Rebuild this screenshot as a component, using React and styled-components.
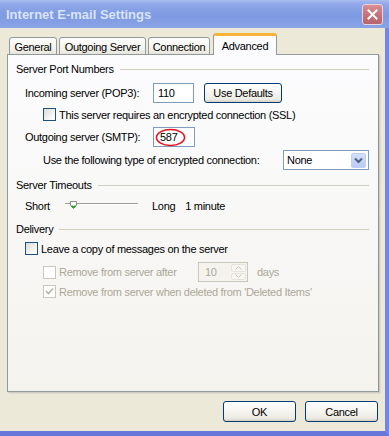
import React from 'react';
import styled, { createGlobalStyle } from 'styled-components';

const Global = createGlobalStyle`
  body { margin: 0; background: #fff; }
  * { box-sizing: border-box; }
`;

function App() {
  return (
    <>
      <Global />
      <Window>
        <TitleBar>
          <Title>Internet E-mail Settings</Title>
          <CloseButton>
            <svg width="11" height="11" viewBox="0 0 11 11">
              <path d="M1.5 1.5 L9.5 9.5 M9.5 1.5 L1.5 9.5" stroke="#fff" strokeWidth="2" strokeLinecap="square" />
            </svg>
          </CloseButton>
        </TitleBar>
        <Body>
          <TabRow>
            <Tab w={48}>General</Tab>
            <Tab w={87}>Outgoing Server</Tab>
            <Tab w={62}>Connection</Tab>
            <Tab w={64} active>Advanced</Tab>
          </TabRow>
          <Panel>
            <GroupHead>Server Port Numbers<Rule /></GroupHead>

            <Row mt={7} h={20}>
              <Label>Incoming server (POP3):</Label>
              <TextBox w={41}>110</TextBox>
              <Button w={78} ml={10}>Use Defaults</Button>
            </Row>

            <Row mt={5} h={13} indent={18}>
              <Check />
              <CheckText>This server requires an encrypted connection (SSL)</CheckText>
            </Row>

            <Row mt={6} h={20}>
              <Label>Outgoing server (SMTP):</Label>
              <TextBox w={42} pl={6}>
                587
                <Circle width="31" height="19" viewBox="0 0 31 19">
                  <ellipse cx="15.5" cy="9.5" rx="14" ry="8" fill="none" stroke="#e8111b" strokeWidth="1.6" />
                </Circle>
              </TextBox>
            </Row>

            <Row mt={3} h={20} indent={18}>
              <Label w={240}>Use the following type of encrypted connection:</Label>
              <Select>
                None
                <DropArrow>
                  <svg width="9" height="7" viewBox="0 0 9 7">
                    <path d="M1 1.5 L4.5 5 L8 1.5" fill="none" stroke="#4d6185" strokeWidth="2" />
                  </svg>
                </DropArrow>
              </Select>
            </Row>

            <GroupHead mt={8}>Server Timeouts<Rule /></GroupHead>

            <Row mt={7} h={14}>
              <Label w={40}>Short</Label>
              <svg width="76" height="12" viewBox="0 0 76 12">
                <line x1="0" y1="3.5" x2="73" y2="3.5" stroke="#9d9c99" />
                <line x1="1" y1="4.5" x2="73" y2="4.5" stroke="#ffffff" />
                <path d="M5.5 1.5 h6 v4 l-3 3 l-3 -3 z" fill="#fff" stroke="#8c8c80" />
                <path d="M6.5 5.5 l2 2 l2 -2" fill="none" stroke="#21a121" strokeWidth="1.3" />
              </svg>
              <Text ml={11}>Long</Text>
              <Text ml={10}>1 minute</Text>
            </Row>

            <GroupHead mt={9}>Delivery<Rule /></GroupHead>

            <Row mt={6} h={13}>
              <Check />
              <CheckText>Leave a copy of messages on the server</CheckText>
            </Row>

            <Row mt={7} h={20} indent={18}>
              <Check disabled />
              <CheckText disabled w={139}>Remove from server after</CheckText>
              <Spinner>
                10
                <SpinButtons>
                  <SpinBtn>
                    <svg width="7" height="4" viewBox="0 0 7 4"><path d="M0.5 3.5 L3.5 0.5 L6.5 3.5" fill="none" stroke="#c9c7ba" /></svg>
                  </SpinBtn>
                  <SpinBtn>
                    <svg width="7" height="4" viewBox="0 0 7 4"><path d="M0.5 0.5 L3.5 3.5 L6.5 0.5" fill="none" stroke="#c9c7ba" /></svg>
                  </SpinBtn>
                </SpinButtons>
              </Spinner>
              <Text ml={9} disabled>days</Text>
            </Row>

            <Row mt={3} h={13} indent={18}>
              <Check disabled checked>
                <svg width="9" height="9" viewBox="0 0 9 9">
                  <path d="M1 4 L3.5 6.5 L8 1.5" fill="none" stroke="#b5b2a6" strokeWidth="1.6" />
                </svg>
              </Check>
              <CheckText disabled>Remove from server when deleted from 'Deleted Items'</CheckText>
            </Row>
          </Panel>
          <Footer>
            <Button w={73} h={21}>OK</Button>
            <Button w={73} h={21}>Cancel</Button>
          </Footer>
        </Body>
      </Window>
    </>
  );
}

export default App;

const Window = styled.div`
  width: 389px;
  height: 436px;
  display: flex;
  flex-direction: column;
  background: #ece9d8;
  border-right: 4px solid #7387e0;
  border-bottom: 5px solid #6676db;
  font-family: "Liberation Sans", Arial, sans-serif;
  font-size: 11px;
  letter-spacing: -0.3px;
  color: #000;
`;

const TitleBar = styled.div`
  height: 28px;
  display: flex;
  align-items: center;
  justify-content: space-between;
  padding: 0 2px 0 6px;
  margin-right: -4px;
  background: linear-gradient(to bottom, #a9bdf0 0%, #8fa8e8 15%, #7f9ae2 55%, #89a3e6 100%);
`;

const Title = styled.div`
  font-family: "Liberation Sans", Arial, sans-serif;
  font-weight: bold;
  font-size: 13px;
  letter-spacing: 0;
  color: #d8e4f8;
`;

const CloseButton = styled.div`
  width: 21px;
  height: 21px;
  margin-right: 4px;
  display: flex;
  align-items: center;
  justify-content: center;
  border: 1px solid #e8d4da;
  border-radius: 3px;
  background: linear-gradient(to bottom, #d89096, #c4737a 50%, #b8656c);
`;

const Body = styled.div`
  flex: 1;
  display: flex;
  flex-direction: column;
  padding: 6px 7px 0 7px;
`;

const TabRow = styled.div`
  display: flex;
  align-items: flex-end;
  gap: 2px;
  padding-left: 2px;
  height: 21px;
  position: relative;
  z-index: 1;
  margin-bottom: -1px;
`;

const Tab = styled.div`
  width: ${p => p.w}px;
  height: ${p => (p.active ? 22 : 18)}px;
  margin-left: ${p => (p.active ? 1 : 0)}px;
  display: flex;
  align-items: center;
  justify-content: center;
  padding-top: 1px;
  border: 1px solid #919b9c;
  border-bottom: ${p => (p.active ? 'none' : '1px solid #919b9c')};
  border-radius: 3px 3px 0 0;
  background: ${p => (p.active ? '#fcfcfe' : 'linear-gradient(to bottom, #fefefe, #f3f2ec 70%, #e5e4dc)')};
  border-top: ${p => (p.active ? '3px solid #f7b43a' : '1px solid #919b9c')};
  white-space: nowrap;
`;

const Panel = styled.div`
  width: 372px;
  height: 338px;
  padding: 7px 9px 0 8px;
  border: 1px solid #919b9c;
  border-right-color: #8b9394;
  box-shadow: 1px 1px 0 #d0cec4, 2px 2px 0 #dedcd1;
  background: linear-gradient(to bottom, #fcfcfe, #f4f3ee);
  display: flex;
  flex-direction: column;
`;

const GroupHead = styled.div`
  display: flex;
  align-items: center;
  height: 14px;
  margin-top: ${p => p.mt || 0}px;
  white-space: nowrap;
`;

const Rule = styled.div`
  flex: 1;
  margin-left: 6px;
  border-top: 1px solid #d0d0bf;
`;

const Row = styled.div`
  display: flex;
  align-items: center;
  height: ${p => p.h}px;
  margin-top: ${p => p.mt || 0}px;
  padding-left: ${p => 9 + (p.indent || 0)}px;
  white-space: nowrap;
`;

const Label = styled.div`
  width: ${p => p.w || 128}px;
  flex-shrink: 0;
`;

const Text = styled.span`
  margin-left: ${p => p.ml || 0}px;
  color: ${p => (p.disabled ? '#aca899' : '#000')};
`;

const TextBox = styled.div`
  position: relative;
  width: ${p => p.w}px;
  height: 20px;
  display: flex;
  align-items: center;
  padding-left: ${p => p.pl || 4}px;
  border: 1px solid #7f9db9;
  background: #fff;
`;

const Circle = styled.svg`
  position: absolute;
  left: 1px;
  top: 0px;
`;

const Button = styled.div`
  width: ${p => p.w}px;
  height: ${p => p.h || 20}px;
  margin-left: ${p => p.ml || 0}px;
  display: flex;
  align-items: center;
  justify-content: center;
  border: 1px solid #003c74;
  border-radius: 3px;
  background: linear-gradient(to bottom, #ffffff 0%, #f5f4ef 50%, #ecebe3 85%, #d6d0c5 100%);
`;

const Check = styled.div`
  width: 13px;
  height: 13px;
  flex-shrink: 0;
  display: flex;
  align-items: center;
  justify-content: center;
  border: 1px solid ${p => (p.disabled ? '#cac8bb' : '#1c5180')};
  background: ${p => (p.disabled ? '#fff' : 'linear-gradient(135deg, #dcdbd5, #fbfbf9 80%)')};
`;

const CheckText = styled.span`
  margin-left: 3px;
  width: ${p => (p.w ? `${p.w}px` : 'auto')};
  color: ${p => (p.disabled ? '#aca899' : '#000')};
`;

const Select = styled.div`
  width: 86px;
  height: 20px;
  display: flex;
  align-items: center;
  justify-content: space-between;
  padding: 0 2px 0 3px;
  border: 1px solid #7f9db9;
  background: #fff;
`;

const DropArrow = styled.div`
  width: 15px;
  height: 15px;
  display: flex;
  align-items: center;
  justify-content: center;
  border-radius: 2px;
  background: linear-gradient(to bottom, #d4e0fb, #b9cbf5);
  border: 1px solid #c0cff5;
`;

const Spinner = styled.div`
  width: 50px;
  height: 20px;
  display: flex;
  align-items: center;
  justify-content: space-between;
  padding: 1px 1px 1px 6px;
  border: 1px solid #c9c7ba;
  background: #f4f3ee;
  color: #aca899;
`;

const SpinButtons = styled.div`
  display: flex;
  flex-direction: column;
  gap: 1px;
  height: 100%;
`;

const SpinBtn = styled.div`
  width: 15px;
  flex: 1;
  display: flex;
  align-items: center;
  justify-content: center;
  border: 1px solid #e6e4da;
  border-radius: 2px;
  background: #f7f6f2;
`;

const Footer = styled.div`
  display: flex;
  justify-content: flex-end;
  gap: 9px;
  margin-top: 9px;
`;
